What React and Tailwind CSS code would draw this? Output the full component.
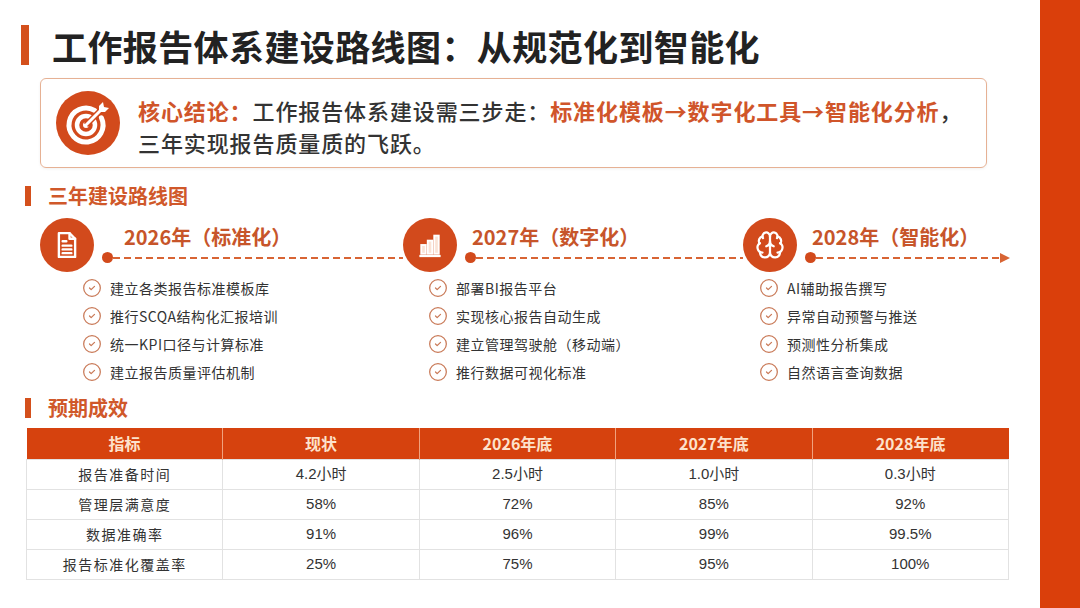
import { Brain, CircleCheck } from 'lucide-react';

const ORANGE = '#d24a1c';

function TargetIcon() {
  return (
    <svg viewBox="0 0 64 64" width="64" height="64">
      <circle cx="32" cy="32" r="32" fill={ORANGE} />
      <path d="M38.5 19.3 A17 17 0 1 0 45.4 26.8" stroke="white" strokeWidth="5" fill="none" strokeLinecap="round" />
      <circle cx="30" cy="34" r="9" stroke="white" strokeWidth="4.5" fill="none" />
      <circle cx="30" cy="34" r="3" fill="white" />
      <line x1="30" y1="34" x2="45" y2="19" stroke={ORANGE} strokeWidth="6" />
      <line x1="30" y1="34" x2="46" y2="18" stroke="white" strokeWidth="3" strokeLinecap="round" />
      <path d="M43 15 L47 11 L48 16 L53 17 L49 21 L43 21 Z" fill="white" />
    </svg>
  );
}

function DocIcon() {
  return (
    <svg viewBox="0 0 24 24" width="30" height="30" fill="none" stroke="white" strokeWidth="1.9" strokeLinejoin="round" strokeLinecap="round">
      <path d="M5.5 2.5h8.5l4.5 4.5v14.5h-13z" />
      <path d="M14 2.5v4.5h4.5" />
      <path d="M8.5 9h3M8.5 12.5h7M8.5 15.5h7M8.5 18.5h7" />
    </svg>
  );
}

function ChartIcon() {
  return (
    <svg viewBox="0 0 24 24" width="30" height="30" fill="none" stroke="white" strokeWidth="1.5">
      <rect x="5" y="12" width="3.6" height="7" fill="#fbe3d6" />
      <rect x="10.2" y="8.5" width="3.6" height="10.5" fill="#fbe3d6" />
      <rect x="15.4" y="4.5" width="3.6" height="14.5" fill="#fbe3d6" />
      <path d="M3.5 20.8h17" strokeWidth="1.8" />
    </svg>
  );
}

const stages = [
  {
    icon: <DocIcon />,
    label: '2026年（标准化）',
    w: 'w-[363px]',
    labelPad: 'pl-[30px]',
    listPad: 'pl-[42px]',
    items: ['建立各类报告标准模板库', '推行SCQA结构化汇报培训', '统一KPI口径与计算标准', '建立报告质量评估机制'],
  },
  {
    icon: <ChartIcon />,
    label: '2027年（数字化）',
    w: 'w-[340px]',
    labelPad: 'pl-[15px]',
    listPad: 'pl-[25px]',
    items: ['部署BI报告平台', '实现核心报告自动生成', '建立管理驾驶舱（移动端）', '推行数据可视化标准'],
  },
  {
    icon: <Brain size={30} color="white" strokeWidth={1.8} />,
    label: '2028年（智能化）',
    w: 'w-[267px]',
    labelPad: 'pl-[15px]',
    listPad: 'pl-[16px]',
    items: ['AI辅助报告撰写', '异常自动预警与推送', '预测性分析集成', '自然语言查询数据'],
    last: true,
  },
];

const rows = [
  ['报告准备时间', '4.2小时', '2.5小时', '1.0小时', '0.3小时'],
  ['管理层满意度', '58%', '72%', '85%', '92%'],
  ['数据准确率', '91%', '96%', '99%', '99.5%'],
  ['报告标准化覆盖率', '25%', '75%', '95%', '100%'],
];

const heads = ['指标', '现状', '2026年底', '2027年底', '2028年底'];

function SectionTitle({ children }) {
  return (
    <div className="flex items-center h-[24px] ml-[4px] gap-[17px]">
      <div className="w-[6px] h-[20px] bg-[#d4501c]" />
      <span className="text-[20px] font-bold text-[#d0582a] leading-none">{children}</span>
    </div>
  );
}

function App() {
  return (
    <div className="w-[1080px] h-[608px] bg-white flex overflow-hidden" style={{ fontFamily: '"Noto Sans CJK SC", "Noto Sans", sans-serif' }}>
      <main className="flex-1 pl-[21px] pt-[25px]">
        <div className="flex items-center gap-[23px] h-[40px]">
          <div className="w-[8px] h-[40px] bg-[#d4501c]" />
          <h1 className="text-[35px] font-bold text-[#222] leading-none tracking-[0.4px]">工作报告体系建设路线图：从规范化到智能化</h1>
        </div>

        <div className="ml-[19px] mt-[13px] w-[947px] h-[90px] border border-[#e6b194] rounded-[6px] flex items-center pl-[15px] gap-[18px] shadow-[0_1px_3px_rgba(0,0,0,0.06)]">
          <div className="shrink-0"><TargetIcon /></div>
          <div className="text-[22px] leading-[32px] text-[#333] font-medium tracking-[0.9px] pt-[6px]">
            <p>
              <span className="font-bold text-[#d0552a]">核心结论：</span>
              工作报告体系建设需三步走：
              <span className="font-bold text-[#d0552a]">标准化模板→数字化工具→智能化分析</span>，
            </p>
            <p>三年实现报告质量质的飞跃。</p>
          </div>
        </div>

        <div className="mt-[16px]">
          <SectionTitle>三年建设路线图</SectionTitle>
        </div>

        <div className="ml-[19px] mt-[10px] flex">
          {stages.map((s) => (
            <div key={s.label} className={s.w}>
              <div className="flex h-[54px]">
                <div className="w-[54px] h-[54px] rounded-full flex items-center justify-center shrink-0" style={{ background: ORANGE }}>
                  {s.icon}
                </div>
                <div className="flex-1 flex flex-col">
                  <div className={`${s.labelPad} mt-[4px] h-[30px] leading-[30px] text-[20px] font-semibold text-[#c7552a]`}>{s.label}</div>
                  <div className="flex items-center h-[11px]">
                    <div className="ml-[8px] w-[11px] h-[11px] rounded-full shrink-0" style={{ background: ORANGE }} />
                    <div className="flex-1 h-[2px] bg-[repeating-linear-gradient(90deg,#d86434_0_7px,transparent_7px_11px)]" />
                    {s.last && (
                      <svg width="10" height="10" viewBox="0 0 10 10" className="shrink-0">
                        <path d="M0 0 L10 5 L0 10 Z" fill="#d86434" />
                      </svg>
                    )}
                  </div>
                </div>
              </div>
              <ul className={`${s.listPad} mt-[2px]`}>
                {s.items.map((it) => (
                  <li key={it} className="flex items-center h-[28px] gap-[8px]">
                    <CircleCheck size={20} color="#c97a58" strokeWidth={1.5} className="shrink-0" />
                    <span className="text-[14px] text-[#333] tracking-[0.5px]">{it}</span>
                  </li>
                ))}
              </ul>
            </div>
          ))}
        </div>

        <div className="mt-[10px]">
          <SectionTitle>预期成效</SectionTitle>
        </div>

        <table className="ml-[5px] mt-[8px] w-[983px] border-collapse table-fixed">
          <thead>
            <tr className="bg-[#d6420e] h-[31px]">
              {heads.map((h, i) => (
                <th key={h} className={`text-[16px] font-bold text-[#fde2cc] ${i > 0 ? 'border-l border-[#f0a27e]' : ''}`}>{h}</th>
              ))}
            </tr>
          </thead>
          <tbody>
            {rows.map((r) => (
              <tr key={r[0]} className="h-[30px]">
                {r.map((c, i) => (
                  <td
                    key={i}
                    className={`border border-[#e2e2e2] text-center text-[14px] text-[#333] ${i === 0 ? 'tracking-[1.5px]' : ''}`}
                    style={i > 0 ? { fontFamily: '"Liberation Sans", "Noto Sans CJK SC", sans-serif', fontSize: 15 } : undefined}
                  >
                    {c}
                  </td>
                ))}
              </tr>
            ))}
          </tbody>
        </table>
      </main>
      <div className="w-[40px] h-full bg-[#da3f0b] shrink-0" />
    </div>
  );
}

export default App;
